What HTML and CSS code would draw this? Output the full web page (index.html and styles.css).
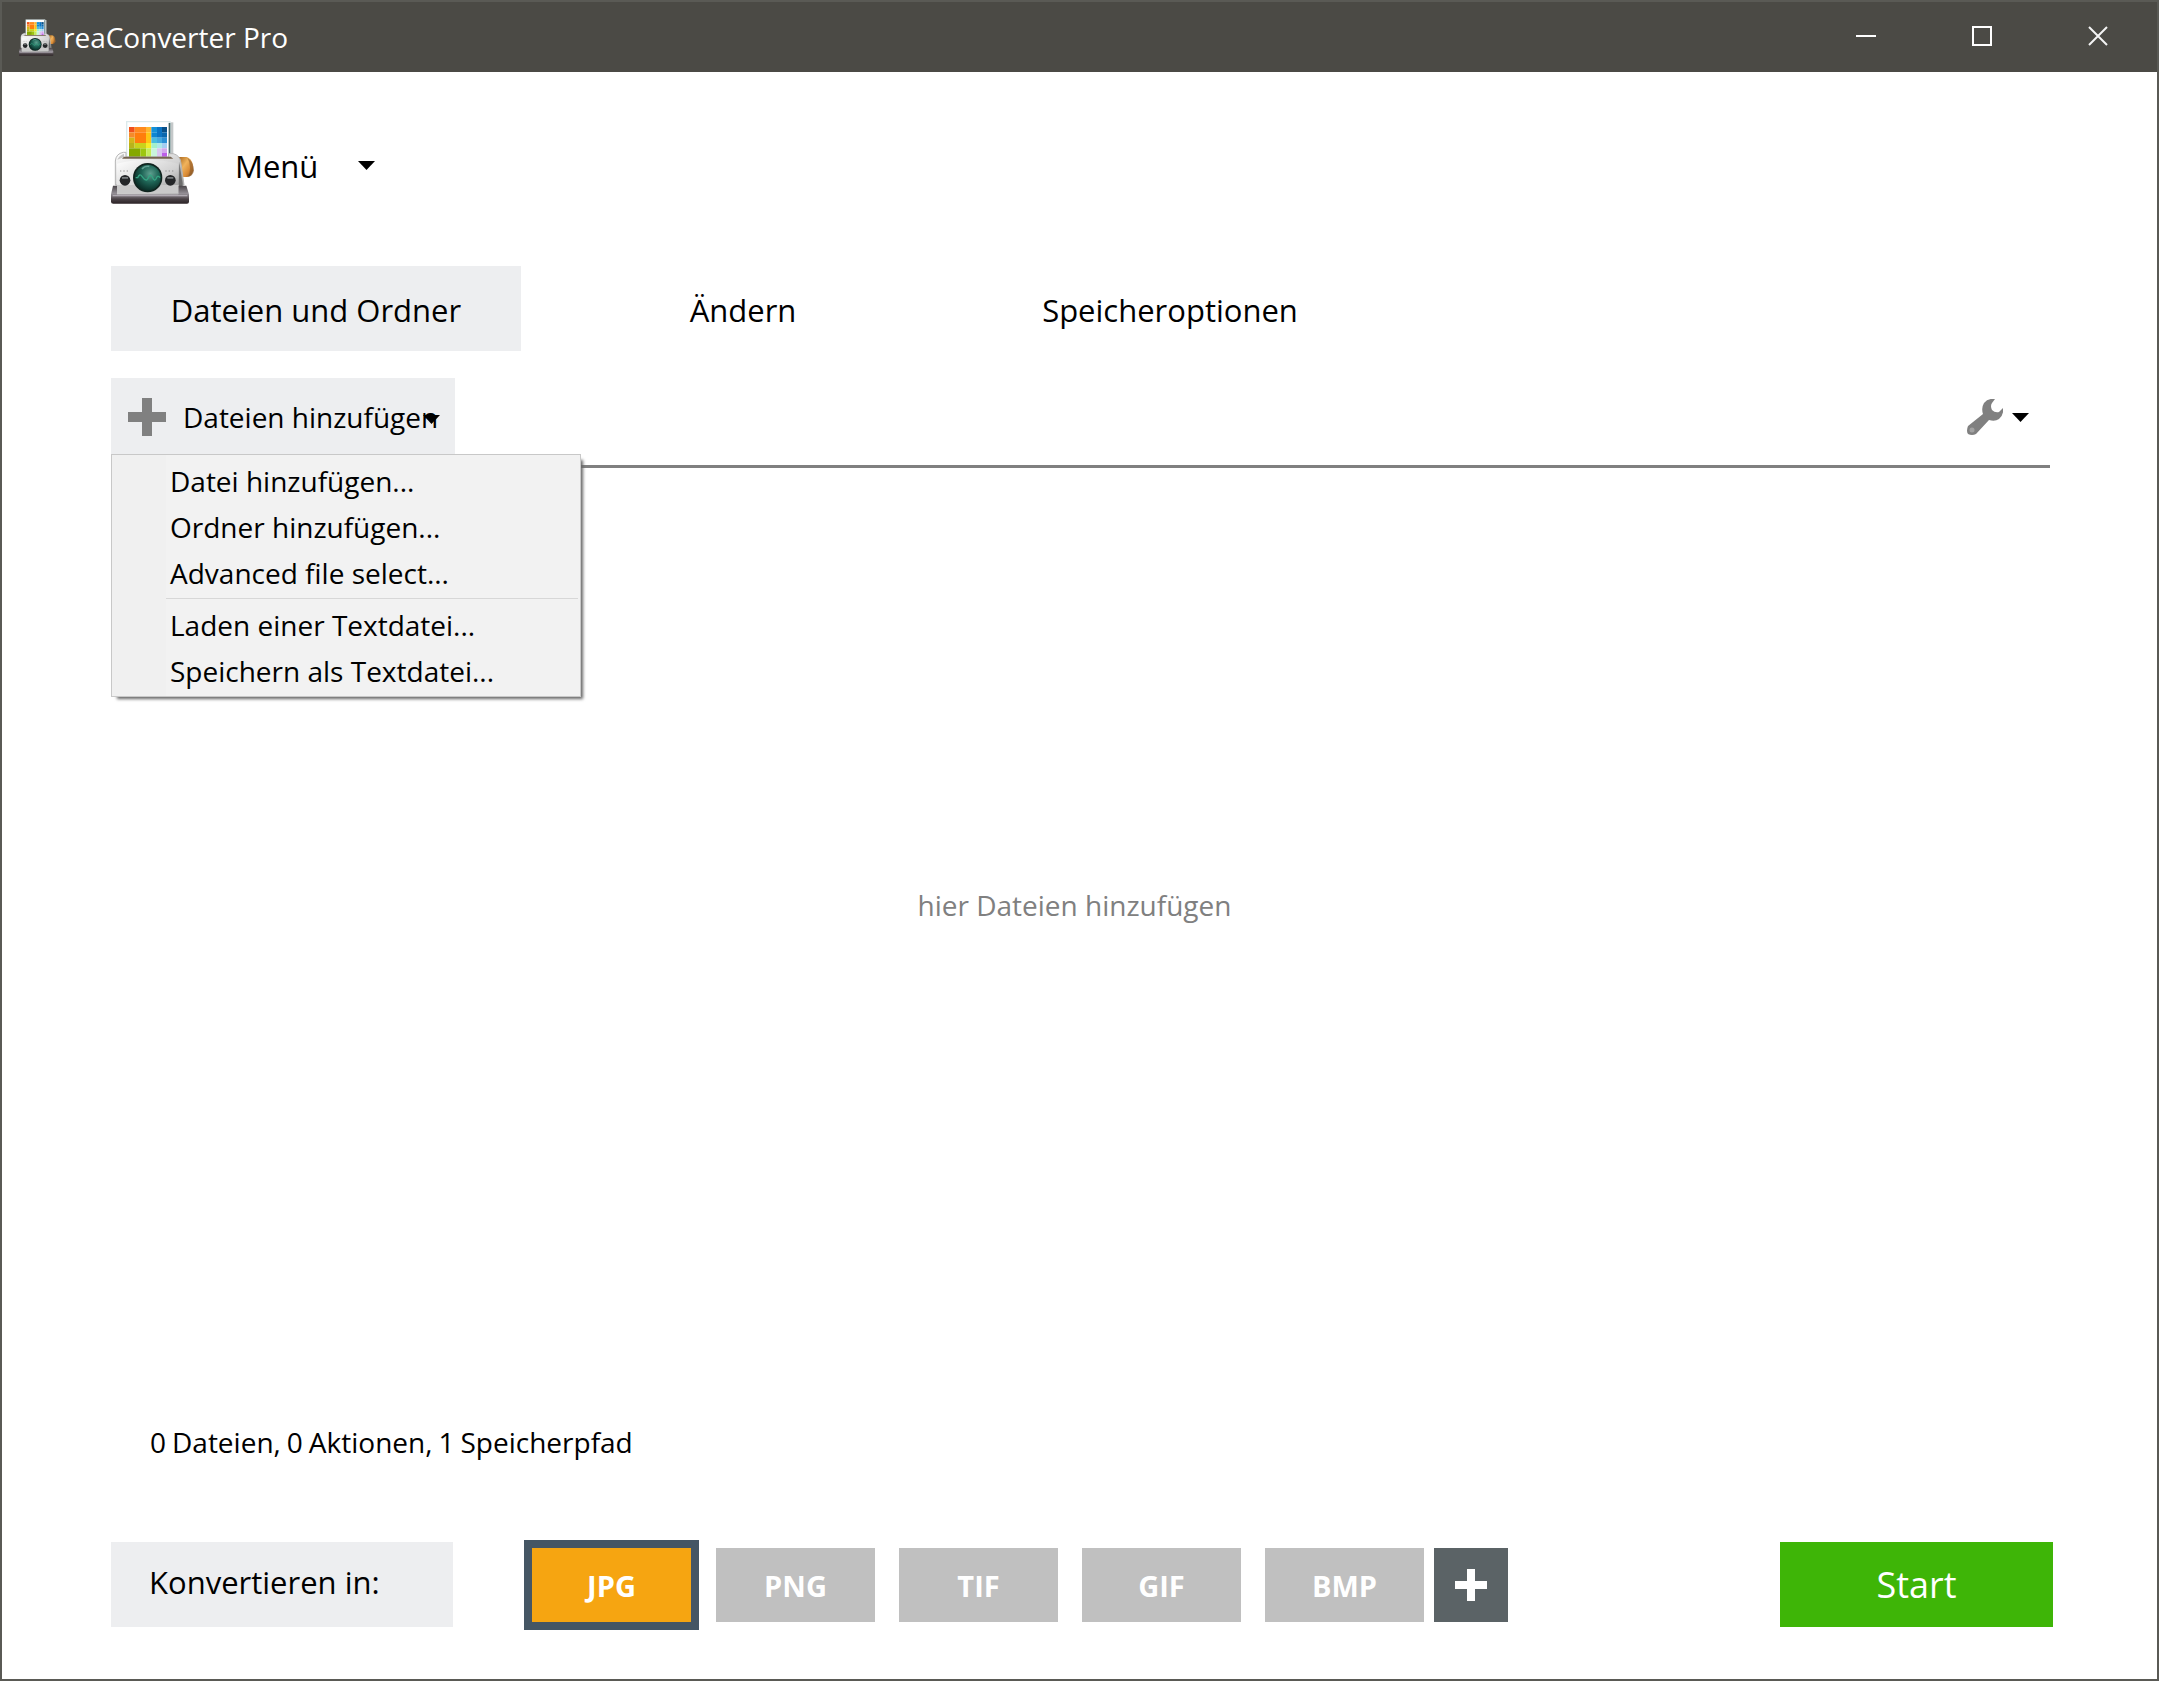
FILE: index.html
```html
<!DOCTYPE html>
<html lang="de">
<head>
<meta charset="utf-8">
<title>reaConverter Pro</title>
<link rel="stylesheet" href="styles.css">
</head>
<body>
<svg class="defs" aria-hidden="true">
  <defs>
    <linearGradient id="body" x1="0" y1="0" x2="1" y2="1">
      <stop offset="0" stop-color="#ffffff"/><stop offset=".6" stop-color="#d2d2d2"/><stop offset="1" stop-color="#8b8b8b"/>
    </linearGradient>
    <linearGradient id="base" x1="0" y1="0" x2="0" y2="1">
      <stop offset="0" stop-color="#4a4549"/><stop offset=".45" stop-color="#969198"/><stop offset=".75" stop-color="#4a4246"/><stop offset="1" stop-color="#2c2326"/>
    </linearGradient>
    <linearGradient id="bread" x1="0" y1="0" x2="1" y2="1">
      <stop offset="0" stop-color="#a9661c"/><stop offset=".4" stop-color="#f0b35c"/><stop offset=".7" stop-color="#d98a35"/><stop offset="1" stop-color="#7a4a18"/>
    </linearGradient>
    <radialGradient id="lens" cx=".6" cy=".35" r=".65">
      <stop offset="0" stop-color="#5fa090"/><stop offset=".5" stop-color="#1f6657"/><stop offset="1" stop-color="#0b3029"/>
    </radialGradient>
    <symbol id="camera" viewBox="33 27 252 252">
      <path d="M236 138h24q14 4 18 22l2 18q-3 18-18 20h-26z" fill="url(#bread)"/>
      <path d="M262 140q20 12 20 40-4 16-18 18 6-10 6-28t-8-30z" fill="#8a5a2b" opacity=".6"/>
      <path d="M210 34h10v108h-10z" fill="#c4c8c9"/>
      <path d="M78 30h134v114H78z" fill="#dceaec"/>
      <path d="M82 34h124v108H82z" fill="#ffffff"/>
      <path d="M206 36h5v108h-5z" fill="#456668"/>
      <path d="M87 48h17v16H87z" fill="#f0501c"/><path d="M104 48h34v16h-34z" fill="#ff8a1e"/><path d="M87 64h17v16H87z" fill="#f58b2a"/>
      <path d="M104 64h34v32h-34z" fill="#ff7d0c"/><path d="M138 48h16v16h-16z" fill="#ffb62e"/><path d="M138 64h16v32h-16z" fill="#ffc414"/>
      <path d="M87 80h17v16H87z" fill="#d3b51a"/><path d="M87 96h17v16H87z" fill="#b9b31a"/><path d="M104 96h34v16h-34z" fill="#c9d21c"/>
      <path d="M138 96h16v16h-16z" fill="#f5ec25"/><path d="M87 112h34v27H87z" fill="#85a800"/><path d="M121 112h18v27h-18z" fill="#9cc60e"/>
      <path d="M139 112h15v27h-15z" fill="#c4ec5a"/><path d="M154 48h17v16h-17z" fill="#1391d8"/><path d="M171 48h15v32h-15z" fill="#0a74c4"/>
      <path d="M186 48h15v16h-15z" fill="#064f88"/><path d="M154 64h17v16h-17z" fill="#0d86d2"/><path d="M186 64h15v16h-15z" fill="#0867ad"/>
      <path d="M154 80h17v16h-17z" fill="#49bde0"/><path d="M171 80h15v16h-15z" fill="#44a9de"/><path d="M186 80h15v16h-15z" fill="#2a8fd4"/>
      <path d="M154 96h17v16h-17z" fill="#a4f0cc"/><path d="M171 96h15v16h-15z" fill="#aee8ea"/><path d="M186 96h15v16h-15z" fill="#a4cdf1"/>
      <path d="M154 112h17v27h-17z" fill="#c9f4dc"/><path d="M171 112h15v27h-15z" fill="#d9c6ef"/><path d="M186 112h15v14h-15z" fill="#d3a6ec"/><path d="M186 126h15v13h-15z" fill="#bd5ee8"/>
      <path d="M46 222V150q2-22 24-26h8v14h128v-10h14q20 6 22 24l10 70z" fill="url(#body)" stroke="#b5b5b5" stroke-width="3"/>
      <path d="M52 146q6-14 20-18v10z" fill="#8a8a8a" opacity=".45"/>
      <path d="M72 137h140l8 6H66z" fill="#75634f"/>
      <path d="M51 158q90-24 184 0v92H51z" fill="url(#body)"/>
      <path d="M238 152l10 70v28h-12z" fill="#6c6c6c"/>
      <path d="M39 224h12v26h184v-26h24l8 26v22q0 6-6 6H40q-7 0-7-6v-22z" fill="url(#base)"/>
      <path d="M51 222h184v26H51z" fill="#c9c9c9"/>
      <path d="M38 252h224v4H38z" fill="#b1abb3"/>
      <path d="M60 180h4m6 0h4m6 0h4m112 0h4m6 0h4m6 0h4" stroke="#8f8f8f" stroke-width="3"/>
      <circle cx="75" cy="208" r="16" fill="#242628"/><circle cx="211" cy="208" r="16" fill="#242628"/>
      <path d="M66 198h18v5H66zm136 0h18v5h-18z" fill="#777c7e"/>
      <circle cx="143" cy="200" r="44" fill="#10241f"/><circle cx="143" cy="200" r="39" fill="url(#lens)"/>
      <path d="M107 200h6q6-14 13-4t10 10q6 4 11-10 6-8 11 4t10 4q4-14 12-4" fill="none" stroke="#35a482" stroke-width="4"/>
      <path d="M126 174q8-10 22-8" stroke="#7db9ad" stroke-width="5" fill="none" opacity=".7"/>
    </symbol>
    <symbol id="caret" viewBox="0 0 17 9"><path d="M0 0h17L8.500 9z"/></symbol>
  </defs>
</svg>

<div class="window">
  <header class="titlebar">
    <svg class="titlebar-icon" aria-hidden="true"><use href="#camera"/></svg>
    <h1 class="titlebar-name">reaConverter Pro</h1>
    <div class="window-controls">
      <button class="window-button" type="button" aria-label="Minimieren"><svg viewBox="0 0 20 20"><path d="M0 10h20" stroke="#fff" stroke-width="2"/></svg></button>
      <button class="window-button" type="button" aria-label="Maximieren"><svg viewBox="0 0 20 20"><path d="M1 1h18v18H1z" fill="none" stroke="#fff" stroke-width="2"/></svg></button>
      <button class="window-button" type="button" aria-label="Schließen"><svg viewBox="0 0 20 20"><path d="M1 1l18 18M19 1L1 19" stroke="#f4f4f4" stroke-width="2"/></svg></button>
    </div>
  </header>

  <main class="content">
    <div class="brand">
      <svg class="brand-logo" aria-hidden="true"><use href="#camera"/></svg>
      <button class="menu-button" type="button">Menü <svg class="caret" aria-hidden="true"><use href="#caret"/></svg></button>
    </div>

    <nav class="tabs">
      <button class="tab tab-active" type="button">Dateien und Ordner</button>
      <button class="tab tab-middle" type="button">Ändern</button>
      <button class="tab" type="button">Speicheroptionen</button>
    </nav>

    <div class="toolbar">
      <div class="add">
        <button class="add-button" type="button" aria-expanded="true">
          <svg class="add-plus" viewBox="0 0 38 38" aria-hidden="true"><path d="M14 0h10v14h14v10H24v14H14V24H0V14h14z" fill="#808080"/></svg>
          <span>Dateien hinzufügen</span>
          <svg class="caret add-caret" aria-hidden="true"><use href="#caret"/></svg>
        </button>
        <div class="dropdown" role="menu">
          <button class="dropdown-item" type="button" role="menuitem">Datei hinzufügen...</button>
          <button class="dropdown-item" type="button" role="menuitem">Ordner hinzufügen...</button>
          <button class="dropdown-item" type="button" role="menuitem">Advanced file select...</button>
          <hr class="dropdown-line">
          <button class="dropdown-item" type="button" role="menuitem">Laden einer Textdatei...</button>
          <button class="dropdown-item" type="button" role="menuitem">Speichern als Textdatei...</button>
        </div>
      </div>
      <button class="tools-button" type="button" aria-label="Werkzeuge">
        <svg class="wrench" viewBox="0 0 36 36" aria-hidden="true"><path fill="#808080" d="M28 0Q21-1 17 4q-3 5-1 11L1 27q-2 5 0 8 4 2 8 0L22 21q6 2 10-1 5-4 4-11l-4 4q-4 1-7-2-2-4 0-7z"/><circle cx="5" cy="31" r="2.500" fill="#a2a2a2"/></svg>
        <svg class="caret" aria-hidden="true"><use href="#caret"/></svg>
      </button>
    </div>

    <section class="dropzone">hier Dateien hinzufügen</section>

    <p class="status"><span>0</span><span>Dateien,</span><span>0</span><span>Aktionen,</span><span>1</span><span>Speicherpfad</span></p>

    <footer class="convert">
      <div class="convert-label" id="convert-label">Konvertieren in:</div>
      <div class="formats" role="group" aria-labelledby="convert-label">
        <button class="format format-active" type="button">JPG</button>
        <button class="format" type="button">PNG</button>
        <button class="format" type="button">TIF</button>
        <button class="format" type="button">GIF</button>
        <button class="format" type="button">BMP</button>
      </div>
      <button class="format-more" type="button" aria-label="Weitere Formate"><svg viewBox="0 0 32 32"><path d="M12 0h8v12h12v8H20v12h-8V20H0v-8h12z" fill="#fff"/></svg></button>
      <button class="start" type="button">Start</button>
    </footer>
  </main>
</div>
</body>
</html>
```
FILE: styles.css
```css
* {
  box-sizing: border-box;
}

body {
  margin: 0;
  font-family: "Open Sans", "Noto Sans", sans-serif;
  font-size: 28px;
  line-height: 40px;
  color: #000;
}

button {
  margin: 0;
  padding: 0;
  border: 0;
  background: none;
  font: inherit;
  color: inherit;
  white-space: nowrap;
}

svg {
  display: block;
  flex: none;
}

.defs {
  position: absolute;
  width: 0;
  height: 0;
}

.window {
  display: flex;
  flex-direction: column;
  min-height: 100vh;
  border: 2px solid #5a5a55;
  background: #fff;
}

/* Title bar */
.titlebar {
  display: flex;
  align-items: center;
  height: 70px;
  padding-left: 17px;
  background: #4b4a45;
  color: #fff;
}

.titlebar-icon {
  width: 37px;
  height: 39px;
}

.titlebar-name {
  margin: 0 auto 0 7px;
  font-size: 28px;
  font-weight: 400;
}

.window-controls {
  display: flex;
  align-self: stretch;
  padding: 0 1px 2px 0;
}

.window-button {
  display: flex;
  align-items: center;
  justify-content: center;
  width: 116px;
}

.window-button svg {
  width: 20px;
  height: 20px;
}

/* Content */
.content {
  display: flex;
  flex: 1;
  flex-direction: column;
  padding: 47px 104px 52px 109px;
}

.caret {
  width: 17px;
  height: 9px;
}

.brand {
  display: flex;
  align-items: center;
  gap: 40px;
  height: 85px;
}

.brand-logo {
  width: 84px;
  height: 84px;
}

.menu-button {
  display: flex;
  align-items: center;
  gap: 40px;
  padding-top: 8px;
  font-size: 31px;
}

.tabs {
  display: flex;
  margin-top: 62px;
}

.tab {
  width: 410px;
  height: 85px;
  padding-top: 3px;
  font-size: 31px;
}

.tab-middle {
  width: 444px;
}

.tab-active,
.add-button,
.convert-label {
  background: #edeef0;
}

.toolbar {
  display: flex;
  align-items: flex-start;
  justify-content: space-between;
  height: 90px;
  margin: 27px 3px 0 0;
  border-bottom: 3px solid #808080;
}

.add {
  position: relative;
}

.add-button {
  position: relative;
  display: flex;
  align-items: center;
  gap: 17px;
  width: 344px;
  height: 76px;
  padding: 2px 0 0 17px;
}

.add-plus {
  width: 38px;
  height: 38px;
}

.add-caret {
  position: absolute;
  top: 37px;
  right: 15px;
}

.dropdown {
  position: absolute;
  z-index: 1;
  top: 76px;
  left: 0;
  width: 470px;
  padding: 3px 2px 2px;
  border: 1px solid #c8c8c8;
  background: linear-gradient(90deg, #f0f0f0 54px, #f2f2f2 54px);
  box-shadow: 4px 4px 3px -2px #666;
}

.dropdown-item {
  display: block;
  width: 100%;
  height: 46px;
  padding-left: 56px;
  text-align: left;
}

.dropdown-line {
  height: 1px;
  margin: 2px 0 3px 52px;
  border: 0;
  background: #d7d7d7;
}

.tools-button {
  display: flex;
  align-items: center;
  gap: 9px;
  height: 76px;
  margin-right: 21px;
  padding-top: 2px;
}

.wrench {
  width: 36px;
  height: 36px;
}

.dropzone {
  display: flex;
  flex: 1;
  align-items: center;
  justify-content: center;
  padding: 0 15px 80px 0;
  color: #808080;
}

.status {
  display: flex;
  gap: 6px;
  margin: 0 0 80px 39px;
}

/* Output formats */
.convert {
  display: flex;
  align-items: center;
  height: 85px;
}

.convert-label {
  width: 342px;
  height: 85px;
  padding: 20px 0 0 38px;
  font-size: 31px;
}

.formats {
  display: flex;
  align-items: center;
  gap: 24px;
  margin-left: 71px;
}

.format {
  width: 159px;
  height: 74px;
  padding-top: 2px;
  background: #c0c0c0;
  color: #fff;
  font-size: 29px;
  font-weight: 700;
}

.format-active {
  width: 175px;
  height: 90px;
  margin-right: -7px;
  border: 8px solid #455664;
  background: #f6a511;
}

.format-more {
  display: flex;
  align-items: center;
  justify-content: center;
  width: 74px;
  height: 74px;
  margin-left: 10px;
  background: #5b6366;
}

.format-more svg {
  width: 32px;
  height: 32px;
}

.start {
  width: 273px;
  height: 85px;
  margin-left: auto;
  background: #3eb507;
  color: #fff;
  font-size: 36px;
}
```
